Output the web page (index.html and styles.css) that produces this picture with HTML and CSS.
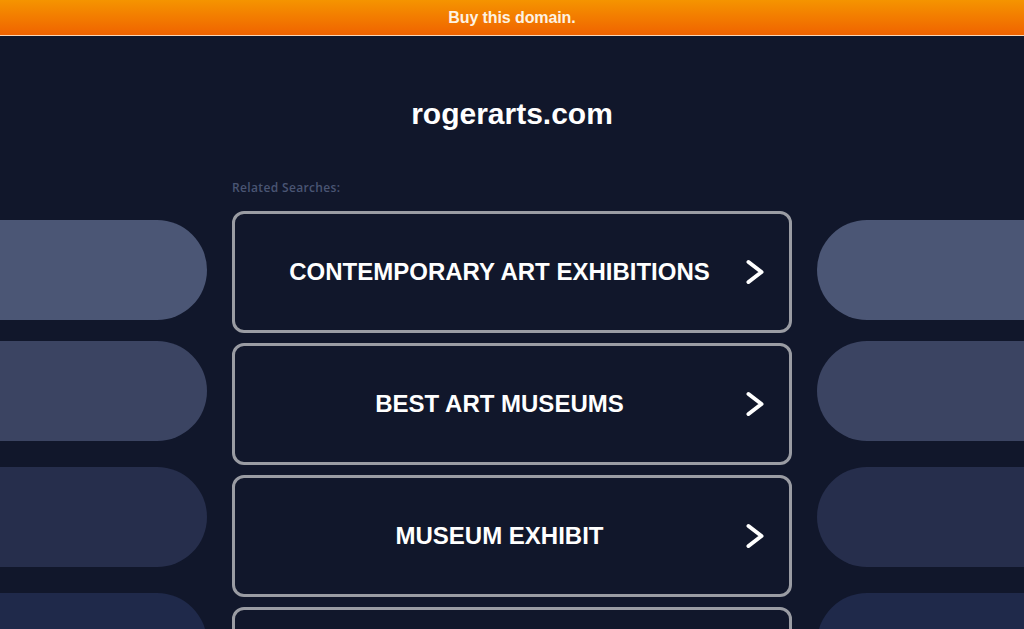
FILE: index.html
```html
<!DOCTYPE html>
<html lang="en">
<head>
  <meta charset="UTF-8" />
  <meta name="viewport" content="width=device-width, initial-scale=1.0" />
  <title>rogerarts.com</title>
  <link rel="stylesheet" href="styles.css">
</head>
<body>
  <div class="topbar">
    <a href="#" class="buy-link">Buy this domain.</a>
  </div>

  <h1 class="domain">rogerarts.com</h1>

  <div class="label-row">
    <span class="related">Related Searches:</span>
  </div>

  <div class="layout">
    <div class="pills pills-left">
      <div class="pill pill-1"></div>
      <div class="pill pill-2"></div>
      <div class="pill pill-3"></div>
      <div class="pill pill-4"></div>
    </div>

    <div class="links">
      <a href="#" class="link-box">
        <span class="link-text">CONTEMPORARY ART EXHIBITIONS</span>
        <svg class="chevron" viewBox="0 0 18 26" width="18" height="26"><path d="M2.5 3 L15.5 13 L2.5 23" fill="none" stroke="#fff" stroke-width="4" stroke-linecap="round" stroke-linejoin="round"/></svg>
      </a>
      <a href="#" class="link-box">
        <span class="link-text">BEST ART MUSEUMS</span>
        <svg class="chevron" viewBox="0 0 18 26" width="18" height="26"><path d="M2.5 3 L15.5 13 L2.5 23" fill="none" stroke="#fff" stroke-width="4" stroke-linecap="round" stroke-linejoin="round"/></svg>
      </a>
      <a href="#" class="link-box">
        <span class="link-text">MUSEUM EXHIBIT</span>
        <svg class="chevron" viewBox="0 0 18 26" width="18" height="26"><path d="M2.5 3 L15.5 13 L2.5 23" fill="none" stroke="#fff" stroke-width="4" stroke-linecap="round" stroke-linejoin="round"/></svg>
      </a>
      <a href="#" class="link-box"></a>
    </div>

    <div class="pills pills-right">
      <div class="pill pill-1"></div>
      <div class="pill pill-2"></div>
      <div class="pill pill-3"></div>
      <div class="pill pill-4"></div>
    </div>
  </div>
</body>
</html>
```

FILE: styles.css
```css
html, body {
  height: 100%;
}
body {
  margin: 0;
  background-color: #11172b;
  font-family: "Liberation Sans", Arial, sans-serif;
  color: white;
  overflow: hidden;
}
a {
  text-decoration: none;
  color: inherit;
}
.topbar {
  height: 35px;
  display: flex;
  align-items: center;
  justify-content: center;
  background: linear-gradient(to bottom, #f59400, #f06300);
  border-bottom: 1px solid #f9d6b4;
}
.buy-link {
  font-size: 16px;
  font-weight: bold;
  color: #fdf2e2;
  letter-spacing: -0.1px;
}
.domain {
  margin: 60px 0 0;
  font-size: 30px;
  line-height: 36px;
  font-weight: bold;
  text-align: center;
}
.label-row {
  width: 560px;
  margin: 47px auto 0;
  line-height: 16px;
}
.related {
  font-family: "Open Sans", sans-serif;
  font-size: 12px;
  font-weight: 600;
  letter-spacing: 0.35px;
  color: #4a5573;
}
.layout {
  display: grid;
  grid-template-columns: 207px 560px 207px;
  column-gap: 25px;
  margin-top: 15px;
}
.pills {
  display: flex;
  flex-direction: column;
  padding-top: 9px;
}
.pill {
  height: 100px;
  margin-bottom: 26px;
}
.pill-1 {
  background-color: #4b5675;
  margin-bottom: 21px;
}
.pill-2 {
  background-color: #3b4462;
}
.pill-3 {
  background-color: #262e4c;
}
.pill-4 {
  background-color: #1f294a;
}
.pills-left .pill {
  border-radius: 0 50px 50px 0;
}
.pills-right .pill {
  border-radius: 50px 0 0 50px;
}
.links {
  display: flex;
  flex-direction: column;
  gap: 10px;
}
.link-box {
  height: 116px;
  display: flex;
  align-items: center;
  padding: 0 25px 0 22px;
  border: 3px solid #9a9ca3;
  border-radius: 12px;
}
.link-text {
  flex: 1;
  text-align: center;
  font-size: 24px;
  font-weight: bold;
}
.chevron {
  margin-left: 4px;
  flex-shrink: 0;
}
```
